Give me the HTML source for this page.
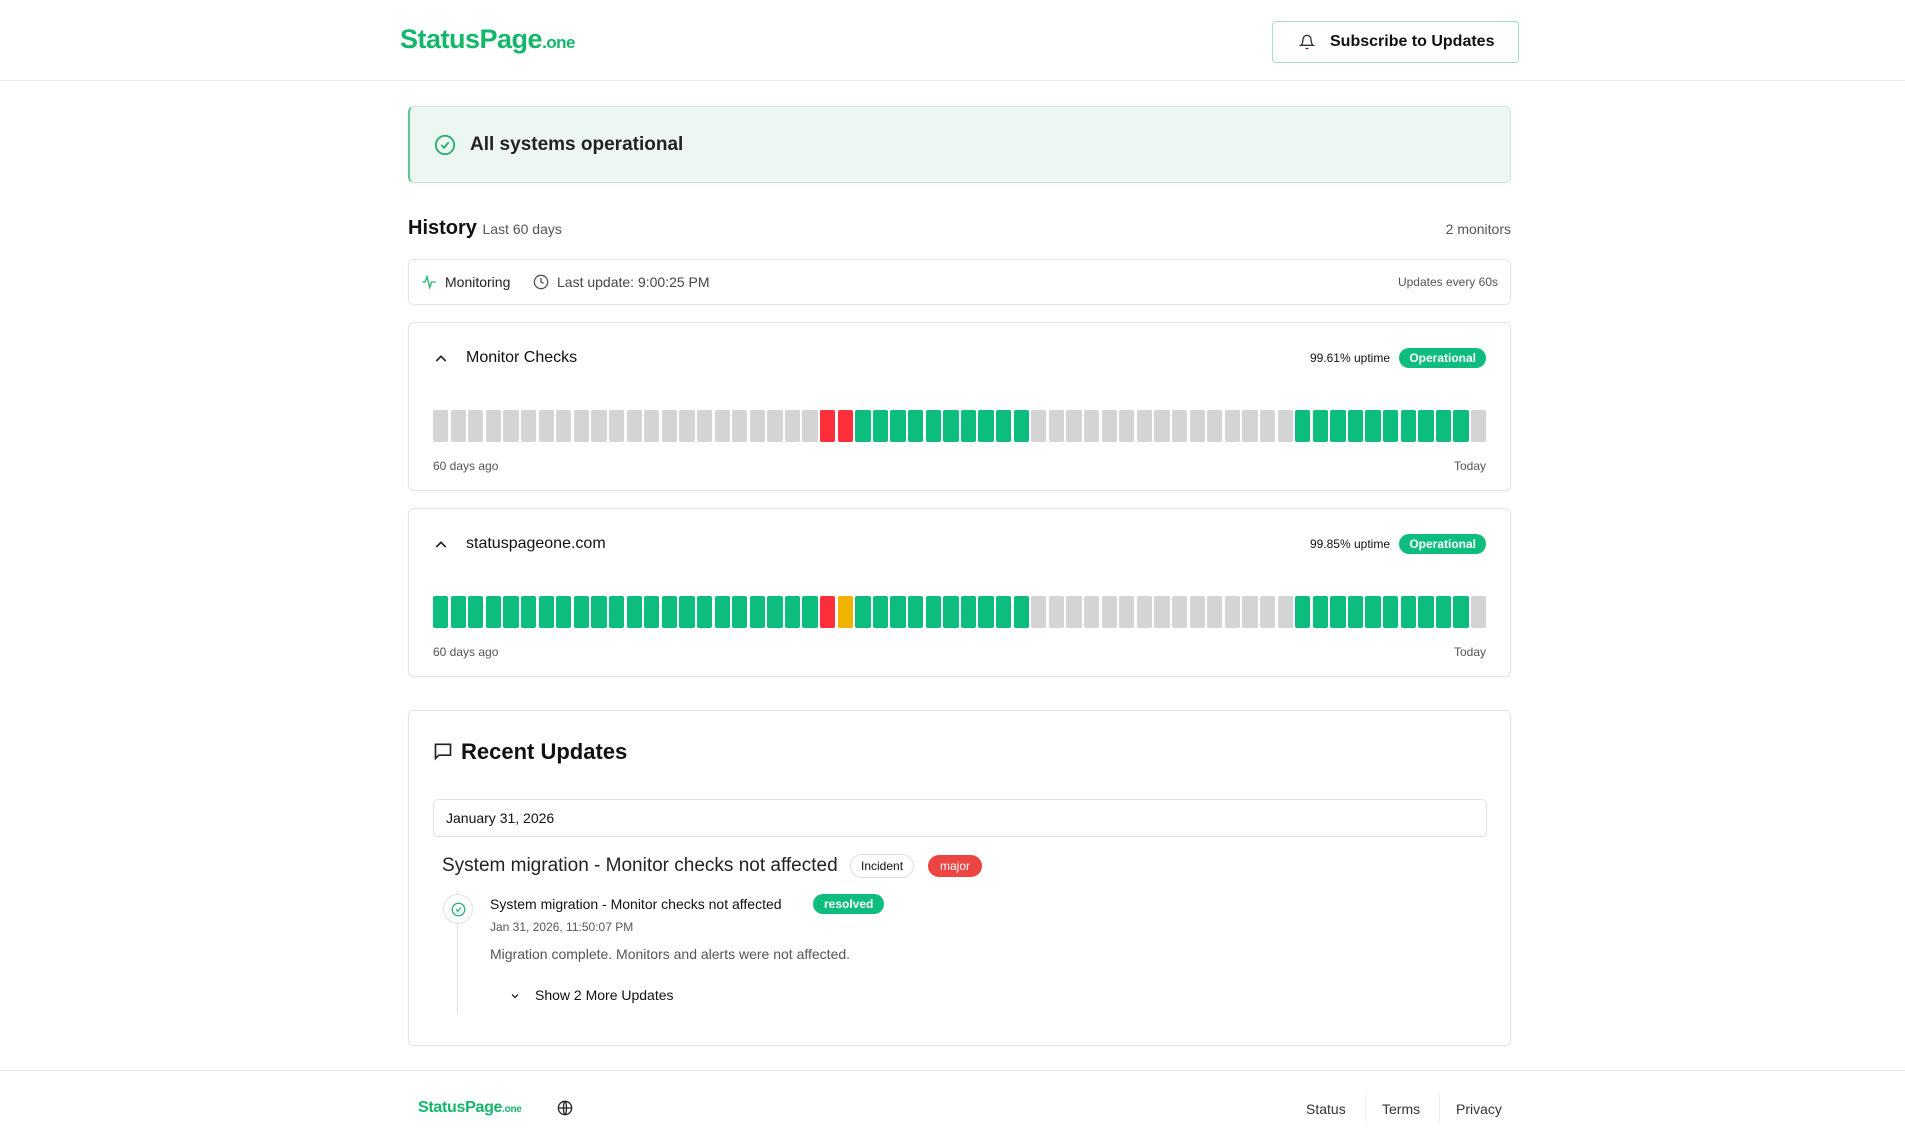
<!DOCTYPE html>
<html><head><meta charset="utf-8"><style>
*{box-sizing:border-box;margin:0;padding:0}
body{width:1905px;height:1147px;background:#fff;font-family:"Liberation Sans",sans-serif;color:#111;position:relative;overflow:hidden}
.a{position:absolute}
.card{position:absolute;left:408px;width:1103px;border:1px solid #e3e5e8;border-radius:6px;background:#fff;box-shadow:0 1px 2px rgba(0,0,0,.04)}
.bars{position:absolute;left:24px;right:24px;height:32px;display:flex;gap:2.3px}
.bars i{flex:1;border-radius:2px;background:#d4d4d4}
.g{background:#0dbd7d!important}.r{background:#ff2e3b!important}.y{background:#f0b400!important}
.pill{display:inline-block;border-radius:12px;font-weight:bold;color:#fff;background:#0dbd7d;font-size:12px;padding:3px 10px}
.small{font-size:12px;color:#555}
</style></head><body>
<div class="a" style="left:0;top:0;width:1905px;height:81px;border-bottom:1px solid #e8eaec"></div>
<div class="a" style="left:400px;top:24px;font-size:27px;font-weight:bold;color:#12b76a;letter-spacing:-0.5px">StatusPage<span style="font-size:17px">.one</span></div>
<div class="a" style="left:1272px;top:21px;width:247px;height:42px;border:1px solid #a8dcc4;border-radius:4px;font-size:16px;font-weight:bold;line-height:40px;padding-left:57px">Subscribe to Updates
<svg class="a" style="left:26px;top:12px" width="16" height="16" viewBox="0 0 24 24" fill="none" stroke="#333" stroke-width="2"><path d="M6 8a6 6 0 0 1 12 0c0 7 3 9 3 9H3s3-2 3-9"/><path d="M10.3 21a1.9 1.9 0 0 0 3.4 0"/></svg></div>

<div class="card" style="top:106px;height:77px;background:#edf7f1;border-color:#cfe8da;border-left:2px solid #5ec491">
<svg class="a" style="left:24px;top:27px" width="22" height="22" viewBox="0 0 24 24" fill="none" stroke="#27ae72" stroke-width="2"><circle cx="12" cy="12" r="10"/><path d="M8 12l3 3 5-6"/></svg>
<div class="a" style="left:60px;top:27px;font-size:19px;font-weight:bold;color:#222">All systems operational</div></div>

<div class="a" style="left:408px;top:217px;font-size:20px;font-weight:bold">History <span style="font-size:14px;font-weight:normal;color:#555">Last 60 days</span></div>
<div class="a" style="right:394px;top:221px;font-size:14px;color:#555">2 monitors</div>

<div class="card" style="top:259px;height:46px">
<svg class="a" style="left:12px;top:14px" width="16" height="16" viewBox="0 0 24 24" fill="none" stroke="#1fb873" stroke-width="2"><path d="M2 12h4l3-8 4 16 3-8h6"/></svg>
<div class="a" style="left:36px;top:14px;font-size:14px;color:#222">Monitoring</div>
<svg class="a" style="left:124px;top:14px" width="16" height="16" viewBox="0 0 24 24" fill="none" stroke="#555" stroke-width="2"><circle cx="12" cy="12" r="10"/><path d="M12 6v6l4 2"/></svg>
<div class="a" style="left:148px;top:14px;font-size:14px;color:#444">Last update: 9:00:25 PM</div>
<div class="a small" style="right:12px;top:15px">Updates every 60s</div></div>

<div class="card" style="top:322px;height:169px">
<svg class="a" style="left:24px;top:28px" width="16" height="16" viewBox="0 0 24 24" fill="none" stroke="#222" stroke-width="2.5"><path d="M5 15l7-7 7 7"/></svg>
<div class="a" style="left:57px;top:26px;font-size:16px">Monitor Checks</div>
<div class="a" style="right:120px;top:28px;font-size:12px">99.61% uptime</div>
<div class="a pill" style="right:24px;top:25px">Operational</div>
<div class="bars" style="top:87px" id="b1"></div>
<div class="a small" style="left:24px;top:136px">60 days ago</div><div class="a small" style="right:24px;top:136px">Today</div></div>

<div class="card" style="top:508px;height:169px">
<svg class="a" style="left:24px;top:28px" width="16" height="16" viewBox="0 0 24 24" fill="none" stroke="#222" stroke-width="2.5"><path d="M5 15l7-7 7 7"/></svg>
<div class="a" style="left:57px;top:26px;font-size:16px">statuspageone.com</div>
<div class="a" style="right:120px;top:28px;font-size:12px">99.85% uptime</div>
<div class="a pill" style="right:24px;top:25px">Operational</div>
<div class="bars" style="top:87px" id="b2"></div>
<div class="a small" style="left:24px;top:136px">60 days ago</div><div class="a small" style="right:24px;top:136px">Today</div></div>

<div class="card" style="top:710px;height:336px">
<svg class="a" style="left:24px;top:30px" width="20" height="20" viewBox="0 0 24 24" fill="none" stroke="#222" stroke-width="2"><path d="M3 4h18v13H7l-4 4z"/></svg>
<div class="a" style="left:52px;top:28px;font-size:22px;font-weight:bold">Recent Updates</div>
<div class="a" style="left:24px;top:88px;width:1054px;height:38px;border:1px solid #dfe2e6;border-radius:5px;font-size:14px;line-height:36px;padding-left:12px">January 31, 2026</div>
<div class="a" style="left:33px;top:144px;font-size:19px;color:#222">System migration - Monitor checks not affected</div>
<div class="a" style="left:441px;top:143px;border:1px solid #ddd;border-radius:12px;font-size:12px;padding:4px 10px">Incident</div>
<div class="a pill" style="left:519px;top:144px;background:#ef4444;font-weight:normal;padding:4px 12px">major</div>
<div class="a" style="left:48px;top:180px;width:1px;height:123px;background:#e2e2e2"></div>
<div class="a" style="left:34px;top:183px;width:30px;height:30px;border:1px solid #e3e3e3;border-radius:50%;background:#fff"><svg class="a" style="left:7px;top:7px" width="15" height="15" viewBox="0 0 24 24" fill="none" stroke="#27ae72" stroke-width="2"><circle cx="12" cy="12" r="10"/><path d="M8 12l3 3 5-6"/></svg></div>
<div class="a" style="left:81px;top:185px;font-size:14px">System migration - Monitor checks not affected</div>
<div class="a pill" style="left:404px;top:183px;padding:3px 11px">resolved</div>
<div class="a small" style="left:81px;top:209px">Jan 31, 2026, 11:50:07 PM</div>
<div class="a" style="left:81px;top:235px;font-size:14px;color:#555">Migration complete. Monitors and alerts were not affected.</div>
<svg class="a" style="left:100px;top:279px" width="12" height="12" viewBox="0 0 24 24" fill="none" stroke="#222" stroke-width="2.5"><path d="M6 9l6 6 6-6"/></svg>
<div class="a" style="left:126px;top:276px;font-size:14px">Show 2 More Updates</div>
</div>

<div class="a" style="left:0;top:1070px;width:1905px;height:1px;background:#e8eaec"></div>
<div class="a" style="left:418px;top:1099px;font-size:16px;font-weight:bold;color:#12b76a;letter-spacing:-0.3px">StatusPage<span style="font-size:10px">.one</span></div>
<svg class="a" style="left:557px;top:1100px" width="16" height="16" viewBox="0 0 24 24" fill="none" stroke="#222" stroke-width="2"><circle cx="12" cy="12" r="10"/><path d="M2 12h20M12 2c3 3 3 17 0 20M12 2c-3 3-3 17 0 20"/></svg>
<div class="a" style="left:1306px;top:1101px;font-size:14px;color:#333">Status</div>
<div class="a" style="left:1365px;top:1093px;width:1px;height:30px;background:#eee"></div>
<div class="a" style="left:1382px;top:1101px;font-size:14px;color:#333">Terms</div>
<div class="a" style="left:1439px;top:1093px;width:1px;height:30px;background:#eee"></div>
<div class="a" style="left:1456px;top:1101px;font-size:14px;color:#333">Privacy</div>
<script>
function f(id,p){var e=document.getElementById(id),h='';for(var i=0;i<60;i++)h+='<i class="'+p(i)+'"></i>';e.innerHTML=h;}
f('b1',function(i){return i<22?'':i<24?'r':i<34?'g':i<49?'':i<59?'g':''});
f('b2',function(i){return i<22?'g':i==22?'r':i==23?'y':i<34?'g':i<49?'':i<59?'g':''});
</script>
</body></html>
